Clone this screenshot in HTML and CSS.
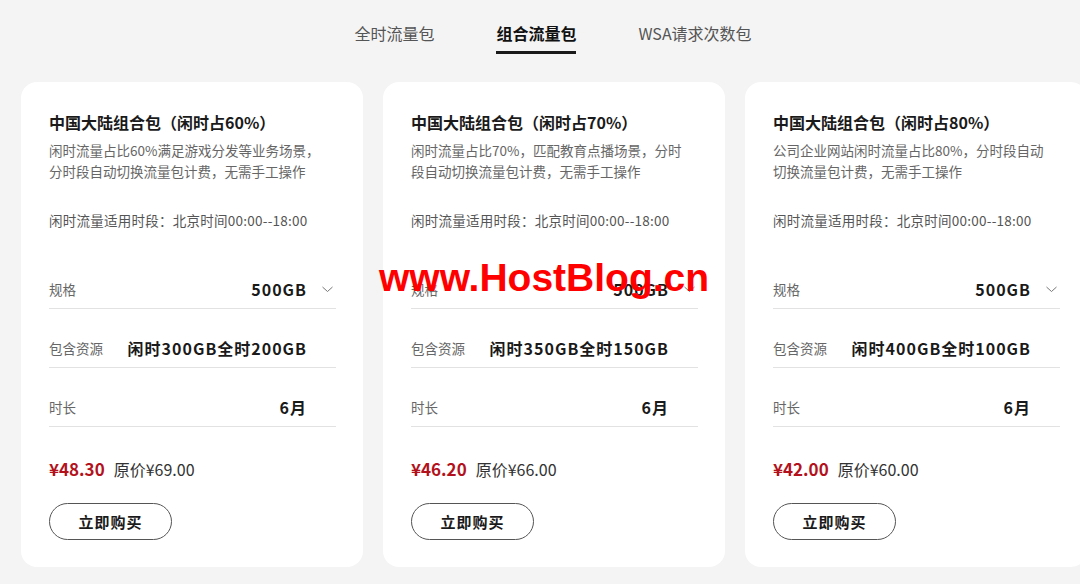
FILE: index.html
```html
<!DOCTYPE html>
<html lang="zh-CN">
<head>
    <meta charset="UTF-8">
    <meta name="viewport" content="width=device-width, initial-scale=1.0">
    <title>组合流量包</title>
    <link rel="stylesheet" href="styles.css">
</head>
<body>

    <nav class="tabs">
        <a class="tab">全时流量包</a>
        <a class="tab active">组合流量包</a>
        <a class="tab">WSA请求次数包</a>
    </nav>

    <div class="cards">
        <!-- 60% -->
        <div class="card">
            <h3 class="card-title">中国大陆组合包（闲时占60%）</h3>
            <p class="card-desc">闲时流量占比60%满足游戏分发等业务场景，分时段自动切换流量包计费，无需手工操作</p>
            <p class="card-period">闲时流量适用时段：北京时间00:00--18:00</p>
            <div class="row">
                <span class="label">规格</span>
                <span class="value">500GB</span>
                <span class="arrow"><svg width="11" height="7" viewBox="0 0 11 7"><polyline points="0.5,1 5.5,5.5 10.5,1" fill="none" stroke="#777" stroke-width="1"/></svg></span>
            </div>
            <div class="row">
                <span class="label">包含资源</span>
                <span class="value">闲时300GB全时200GB</span>
                <span class="arrow"></span>
            </div>
            <div class="row">
                <span class="label">时长</span>
                <span class="value">6月</span>
                <span class="arrow"></span>
            </div>
            <div class="price">
                <span class="now">¥48.30</span>
                <span class="old">原价¥69.00</span>
            </div>
            <button class="buy">立即购买</button>
        </div>

        <!-- 70% -->
        <div class="card">
            <h3 class="card-title">中国大陆组合包（闲时占70%）</h3>
            <p class="card-desc">闲时流量占比70%，匹配教育点播场景，分时段自动切换流量包计费，无需手工操作</p>
            <p class="card-period">闲时流量适用时段：北京时间00:00--18:00</p>
            <div class="row">
                <span class="label">规格</span>
                <span class="value">500GB</span>
                <span class="arrow"><svg width="11" height="7" viewBox="0 0 11 7"><polyline points="0.5,1 5.5,5.5 10.5,1" fill="none" stroke="#777" stroke-width="1"/></svg></span>
            </div>
            <div class="row">
                <span class="label">包含资源</span>
                <span class="value">闲时350GB全时150GB</span>
                <span class="arrow"></span>
            </div>
            <div class="row">
                <span class="label">时长</span>
                <span class="value">6月</span>
                <span class="arrow"></span>
            </div>
            <div class="price">
                <span class="now">¥46.20</span>
                <span class="old">原价¥66.00</span>
            </div>
            <button class="buy">立即购买</button>
        </div>

        <!-- 80% -->
        <div class="card">
            <h3 class="card-title">中国大陆组合包（闲时占80%）</h3>
            <p class="card-desc">公司企业网站闲时流量占比80%，分时段自动切换流量包计费，无需手工操作</p>
            <p class="card-period">闲时流量适用时段：北京时间00:00--18:00</p>
            <div class="row">
                <span class="label">规格</span>
                <span class="value">500GB</span>
                <span class="arrow"><svg width="11" height="7" viewBox="0 0 11 7"><polyline points="0.5,1 5.5,5.5 10.5,1" fill="none" stroke="#777" stroke-width="1"/></svg></span>
            </div>
            <div class="row">
                <span class="label">包含资源</span>
                <span class="value">闲时400GB全时100GB</span>
                <span class="arrow"></span>
            </div>
            <div class="row">
                <span class="label">时长</span>
                <span class="value">6月</span>
                <span class="arrow"></span>
            </div>
            <div class="price">
                <span class="now">¥42.00</span>
                <span class="old">原价¥60.00</span>
            </div>
            <button class="buy">立即购买</button>
        </div>
    </div>

    <div class="watermark">www.HostBlog.cn</div>

</body>
</html>
```

FILE: styles.css
```css
/* page */
body {
    margin: 0;
    padding: 0;
    background: #f4f4f4;
    font-family: "Noto Sans CJK SC", "Noto Sans", sans-serif;
    color: #1a1a1a;
    overflow: hidden;
    position: relative;
    height: 584px;
}

/* tabs */
.tabs {
    display: flex;
    justify-content: center;
    gap: 62px;
    padding: 22px 0 0 26px;
}

.tab {
    font-size: 16px;
    line-height: 22px;
    color: #555;
    padding-bottom: 7px;
    border-bottom: 3px solid transparent;
}

.tab.active {
    color: #111;
    font-weight: bold;
    border-bottom-color: #1a1a1a;
}

/* cards */
.cards {
    display: flex;
    gap: 20px;
    margin-top: 28px;
    padding-left: 21px;
}

.card {
    flex: 0 0 342px;
    box-sizing: border-box;
    background: #fff;
    border-radius: 16px;
    padding: 28px 27px 27px 28px;
}

.card-title {
    margin: 0;
    font-size: 16px;
    line-height: 24px;
    font-weight: bold;
    color: #1a1a1a;
}

.card-desc {
    margin: 6px 0 0;
    max-width: 280px;
    font-size: 13.5px;
    line-height: 21px;
    color: #666;
    height: 42px;
}

.card-period {
    margin: 28px 0 0;
    font-size: 13.5px;
    letter-spacing: 0.25px;
    line-height: 20px;
    color: #555;
}

.row {
    display: flex;
    align-items: center;
    padding: 29px 0 8px;
    line-height: 21px;
    border-bottom: 1px solid #e2e2e2;
}

.row:first-of-type {
    margin-top: 20px;
}

.label {
    font-size: 13.5px;
    color: #666;
    flex: 0 0 auto;
}

.value {
    flex: 1;
    text-align: right;
    font-size: 16px;
    font-weight: bold;
    letter-spacing: 1px;
    color: #1a1a1a;
}

.arrow {
    flex: 0 0 29px;
    display: flex;
    justify-content: flex-end;
    padding-right: 3px;
    box-sizing: border-box;
}

.arrow svg {
    display: block;
}

/* price + button */
.price {
    margin-top: 30px;
    line-height: 24px;
    display: flex;
    align-items: baseline;
    gap: 9px;
}

.now {
    font-size: 17px;
    font-weight: bold;
    color: #b3121c;
}

.old {
    font-size: 16px;
    color: #333;
}

.buy {
    display: block;
    box-sizing: border-box;
    margin-top: 22px;
    width: 123px;
    height: 37px;
    border: 1px solid #555;
    border-radius: 19px;
    background: #fff;
    font-family: inherit;
    font-size: 15px;
    font-weight: bold;
    color: #1a1a1a;
    letter-spacing: 1px;
    padding: 0;
}

/* watermark stamped over the screenshot */
.watermark {
    position: absolute;
    left: 379px;
    top: 256px;
    font-family: "Liberation Sans", Arial, sans-serif;
    font-weight: bold;
    font-size: 39px;
    line-height: 44px;
    color: #f00;
    pointer-events: none;
}
```
